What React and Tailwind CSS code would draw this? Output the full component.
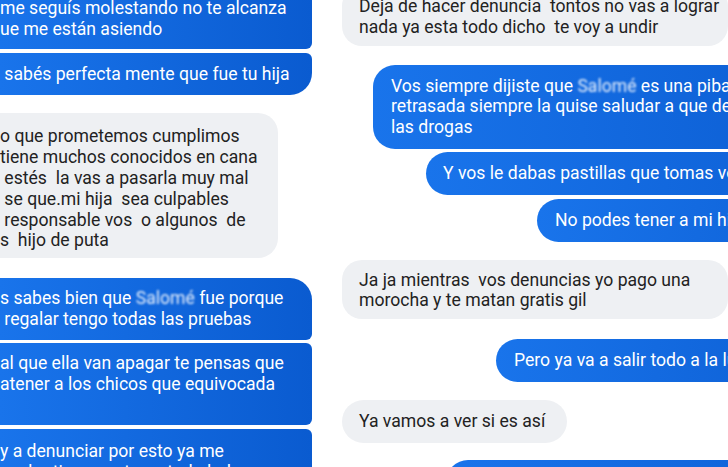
import React from 'react'

const Name = () => (
  <span className="blur-[1.2px] text-white/90">Salomé</span>
)

const Lines = ({ lines }) => (
  <>
    {lines.map((l, i) => (
      <div key={i} className="whitespace-pre h-[20.8px]">{l}</div>
    ))}
  </>
)

const blue = 'bg-linear-to-r from-[#1974eb] to-[#0a5bd0] text-white'
const gray = 'bg-[#eef0f3] text-[#222222]'

export default function App() {
  return (
    <div className="w-[728px] h-[467px] overflow-hidden bg-white flex font-['Roboto',sans-serif] text-[17.6px] leading-[20.8px]">
      {/* left screenshot */}
      <div className="w-[336px] shrink-0 h-full overflow-hidden flex flex-col items-start">
        <div className={`${blue} w-[312px] mt-[-11px] py-[9px] rounded-tr-[6px] rounded-br-[6px]`}>
          <Lines lines={['me seguís molestando no te alcanza', 'ue me están asiendo']} />
        </div>
        <div className={`${blue} w-[312px] mt-[4px] py-[11px] rounded-tr-[6px] rounded-br-[22px]`}>
          <Lines lines={[' sabés perfecta mente que fue tu hija']} />
        </div>
        <div className={`${gray} w-[278px] mt-[18px] pt-[13px] pb-[7px] rounded-r-[20px]`}>
          <Lines
            lines={[
              'o que prometemos cumplimos',
              'tiene muchos conocidos en cana',
              ' estés  la vas a pasarla muy mal',
              ' se que.mi hija  sea culpables',
              ' responsable vos  o algunos  de',
              's  hijo de puta',
            ]}
          />
        </div>
        <div className={`${blue} w-[312px] mt-[20px] py-[10px] rounded-tr-[22px] rounded-br-[6px]`}>
          <div className="whitespace-pre h-[20.8px]">
            s sabes bien que <Name /> fue porque
          </div>
          <div className="whitespace-pre h-[20.8px]"> regalar tengo todas las pruebas</div>
        </div>
        <div className={`${blue} w-[312px] mt-[3px] py-[10px] rounded-r-[6px]`}>
          <Lines lines={['al que ella van apagar te pensas que', 'atener a los chicos que equivocada', '']} />
        </div>
        <div className={`${blue} w-[312px] mt-[4px] pt-[12px] pb-[10px] rounded-tr-[6px]`}>
          <Lines lines={['y a denunciar por esto ya me', 'acabo tiene gente en todo lado']} />
        </div>
      </div>

      {/* right screenshot */}
      <div className="flex-1 h-full overflow-hidden flex flex-col items-start">
        <div className={`${gray} ml-[6px] w-[386px] mt-[-14px] pt-[10px] pb-[8px] px-[17px] rounded-[20px]`}>
          <Lines lines={['Deja de hacer denuncia  tontos no vas a lograr', 'nada ya esta todo dicho  te voy a undir']} />
        </div>
        <div className={`${blue} ml-[37px] w-[520px] mt-[19px] py-[11px] px-[18px] rounded-l-[22px] whitespace-nowrap`}>
          <div className="whitespace-pre h-[20.8px]">
            Vos siempre dijiste que <Name /> es una piba re
          </div>
          <div className="whitespace-pre h-[20.8px]">retrasada siempre la quise saludar a que deje</div>
          <div className="whitespace-pre h-[20.8px]">las drogas</div>
        </div>
        <div className={`${blue} ml-[90px] w-[500px] mt-[3px] py-[11px] px-[17px] rounded-l-[22px]`}>
          <Lines lines={['Y vos le dabas pastillas que tomas vos']} />
        </div>
        <div className={`${blue} ml-[201px] w-[400px] mt-[4px] py-[11px] px-[18px] rounded-l-[22px]`}>
          <Lines lines={['No podes tener a mi hija']} />
        </div>
        <div className={`${gray} ml-[6px] w-[386px] mt-[18px] pt-[10px] pb-[8px] px-[17px] rounded-[20px]`}>
          <Lines lines={['Ja ja mientras  vos denuncias yo pago una', 'morocha y te matan gratis gil']} />
        </div>
        <div className={`${blue} ml-[160px] w-[400px] mt-[20px] py-[11px] px-[18px] rounded-l-[22px]`}>
          <Lines lines={['Pero ya va a salir todo a la luz']} />
        </div>
        <div className={`${gray} ml-[6px] mt-[18px] py-[11px] pl-[17px] pr-[22px] rounded-[22px]`}>
          <Lines lines={['Ya vamos a ver si es así']} />
        </div>
        <div className={`${blue} ml-[110px] w-[500px] h-[60px] mt-[17px] shrink-0 rounded-l-[22px]`} />
      </div>
    </div>
  )
}
